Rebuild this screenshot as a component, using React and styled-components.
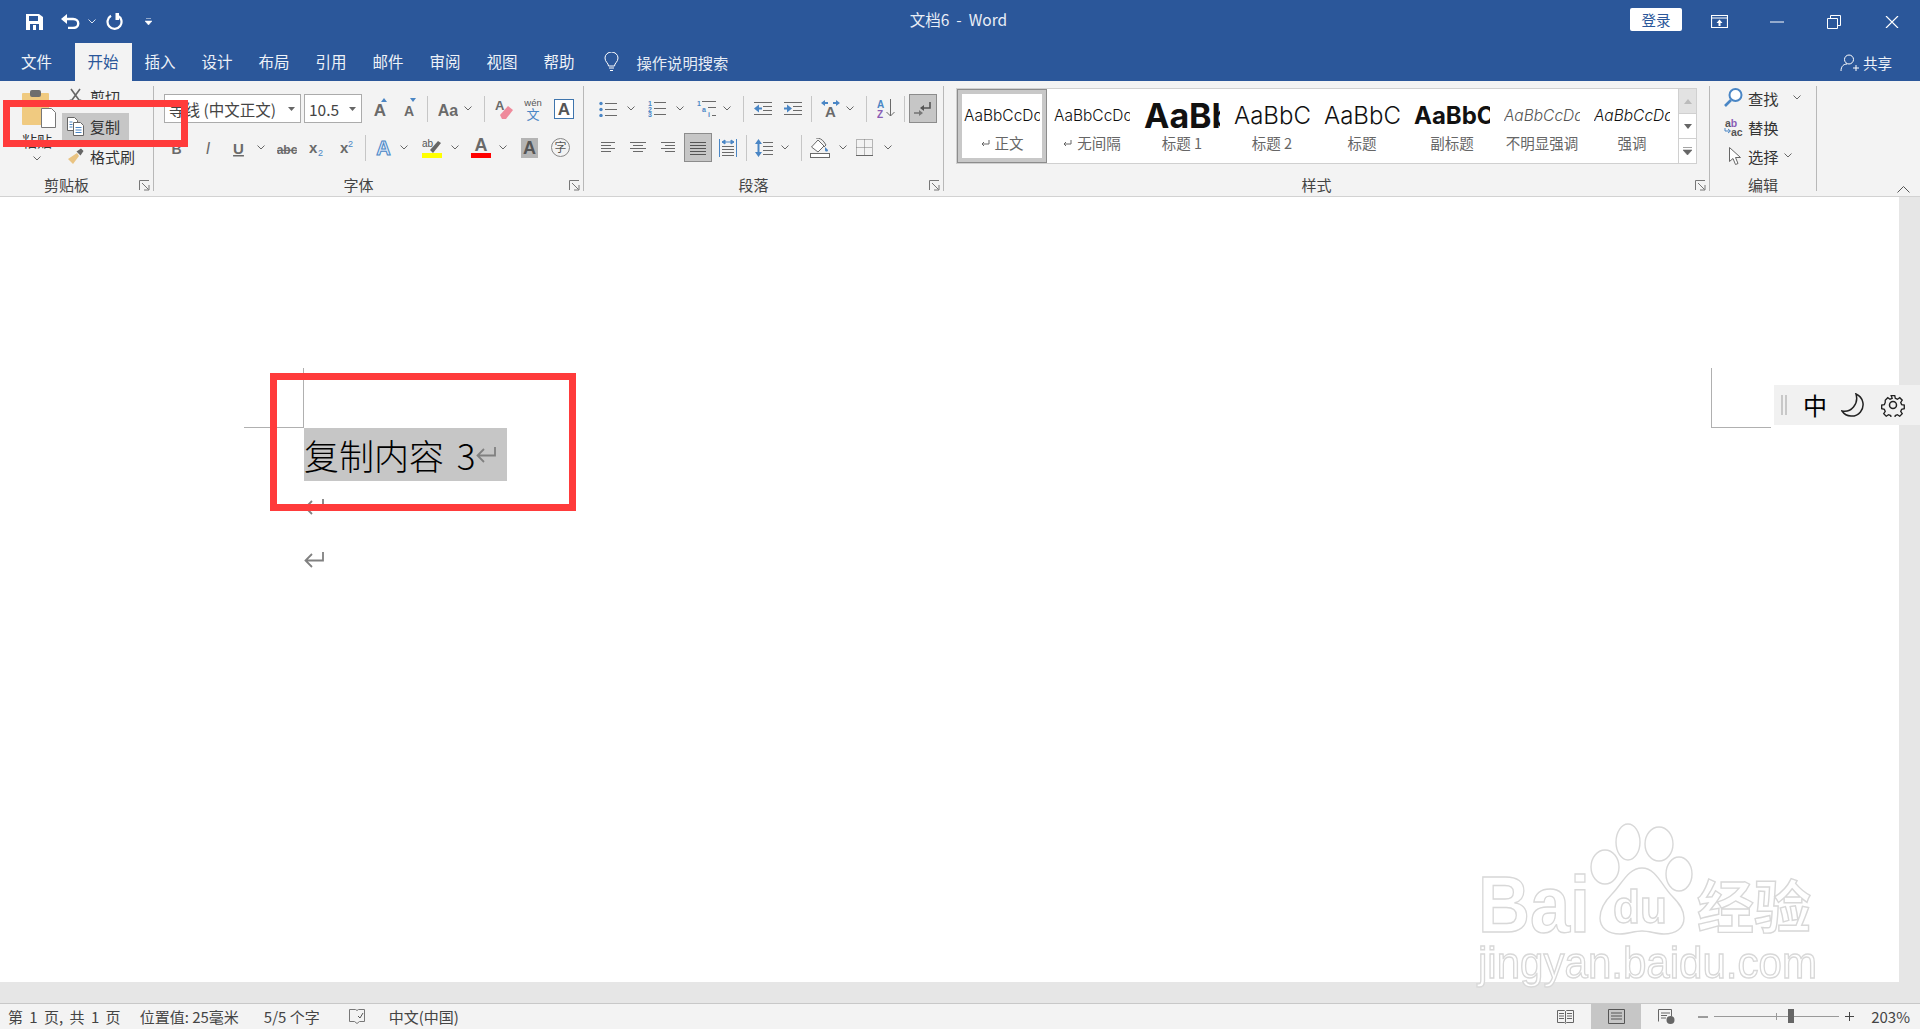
import React from "react";
import styled, { createGlobalStyle } from "styled-components";

const BLUE = "#2b579a";
const GREY = "#6a6a6a";
const ICON_BLUE = "#4a86c5";
const SANS = "Liberation Sans, sans-serif";
const CJK = `"Noto Sans CJK SC", "Liberation Sans", sans-serif`;

const GlobalStyle = createGlobalStyle`
  html, body { margin: 0; padding: 0; height: 100%; overflow: hidden; }
  body { font-family: ${CJK}; color: #333; background: #fff; }
`;

const Shell = styled.div`
  position: relative;
  display: flex;
  flex-direction: column;
  width: 1920px;
  height: 1029px;
  overflow: hidden;
`;

const TitleBar = styled.div`
  display: flex;
  align-items: center;
  height: 43px;
  padding-right: 21px;
  background: ${BLUE};
  color: #fff;
`;

const DocTitle = styled.div`
  position: absolute;
  left: -3px;
  right: 0;
  top: 9px;
  text-align: center;
  font-size: 15.5px;
  line-height: 20px;
  color: #e9eef6;
`;

const Ico = styled.svg`
  flex: none;
  display: block;
  margin-left: ${(p) => p.$ml || 0}px;
`;

const StyleMark = styled(Ico)`
  margin-right: 5px;
`;

const LoginBtn = styled.div`
  width: 52px;
  height: 23px;
  margin-left: auto;
  margin-right: 29px;
  margin-top: -4px;
  border-radius: 2px;
  background: #fff;
  color: ${BLUE};
  font-size: 14.5px;
  line-height: 23px;
  text-align: center;
`;

const TabBar = styled.div`
  display: flex;
  align-items: stretch;
  height: 38px;
  background: ${BLUE};
`;

const Tab = styled.div`
  width: 57px;
  margin-left: ${(p) => p.$ml || 0}px;
  padding-top: 6px;
  box-sizing: border-box;
  text-align: center;
  font-size: 15.5px;
  line-height: 24px;
  color: ${(p) => (p.$active ? BLUE : "#eef2f8")};
  background: ${(p) => (p.$active ? "#f3f3f3" : "transparent")};
`;

const SearchHint = styled.div`
  display: flex;
  align-items: center;
  margin-left: 16px;
  padding-bottom: 1px;
  font-size: 15.3px;
  color: #e6ecf5;
`;

const HintText = styled.span`
  margin-left: ${(p) => p.$ml}px;
  white-space: nowrap;
`;

const Share = styled.div`
  display: flex;
  align-items: center;
  margin-left: auto;
  margin-right: 28px;
  padding-top: 1px;
  font-size: 14.5px;
  color: #eef2f8;
`;

const Ribbon = styled.div`
  position: relative;
  display: flex;
  align-items: stretch;
  height: 116px;
  padding: 5px 0;
  box-sizing: border-box;
  background: #f3f3f3;
  border-bottom: 1px solid #d2d2d2;
`;

const Group = styled.div`
  position: relative;
  display: flex;
  flex-direction: column;
  width: ${(p) => p.$w}px;
  box-sizing: border-box;
  border-right: 1px solid #b8b8b8;
`;

const ToolRow = styled.div`
  display: flex;
  align-items: center;
  height: 29px;
  margin-top: ${(p) => p.$mt}px;
`;

const GroupLabel = styled.div`
  margin-top: auto;
  margin-bottom: -1px;
  padding-right: ${(p) => (p.$launcher ? 20 : 0)}px;
  text-align: center;
  font-size: 15px;
  line-height: 14px;
  color: #444;
`;

const Launcher = styled.svg`
  position: absolute;
  right: 3px;
  bottom: 0;
`;

const VSep = styled.i`
  flex: none;
  width: 1px;
  height: 26px;
  margin-left: ${(p) => p.$ml}px;
  background: #c6c6c6;
`;

const Combo = styled.div`
  display: flex;
  align-items: center;
  justify-content: space-between;
  width: ${(p) => p.$w}px;
  height: 29px;
  margin-left: ${(p) => p.$ml}px;
  padding: 0 5px 0 4px;
  box-sizing: border-box;
  background: #fff;
  border: 1px solid #ababab;
  font-size: 15.5px;
  white-space: nowrap;
  overflow: hidden;
  color: #444;
`;

const ToggleBtn = styled.div`
  display: flex;
  align-items: center;
  justify-content: center;
  width: 28px;
  height: 29px;
  margin-left: ${(p) => p.$ml}px;
  box-sizing: border-box;
  background: #c6c6c6;
  border: 1px solid #8c8c8c;
`;

const ClipboardBody = styled.div`
  display: flex;
  height: 92px;
`;

const PasteCol = styled.div`
  display: flex;
  flex-direction: column;
  align-items: center;
  width: 62px;
  padding: 4px 0 0 12px;
  box-sizing: border-box;
  font-size: 15px;
  color: #333;
`;

const PasteLabel = styled.div`
  margin: 2px 0 5px;
  line-height: 20px;
  white-space: nowrap;
`;

const ClipCol = styled.div`
  display: flex;
  flex-direction: column;
  margin-top: -3px;
`;

const ClipItem = styled.div`
  display: flex;
  align-items: center;
  width: 67px;
  height: 27px;
  margin-top: ${(p) => p.$mt || 0}px;
  padding-left: 5px;
  box-sizing: border-box;
  font-size: 15px;
  white-space: nowrap;
  color: #333;
  background: ${(p) => (p.$hover ? "#c6c6c6" : "transparent")};
`;

const ClipText = styled.span`
  margin-left: 6px;
`;

const Gallery = styled.div`
  display: flex;
  width: 741px;
  height: 76px;
  margin: 2px 0 0 12px;
  box-sizing: border-box;
  background: #fff;
  border: 1px solid #d0d0d0;
`;

const StyleItem = styled.div`
  display: flex;
  flex-direction: column;
  align-items: center;
  width: 90px;
  height: 74px;
  flex: none;
  box-sizing: border-box;
  border: ${(p) => (p.$selected ? "5px solid #c8c8c8" : "5px solid transparent")};
  outline: ${(p) => (p.$selected ? "1px solid #8c8c8c" : "none")};
  outline-offset: -1px;
`;

const Preview = styled.div`
  width: 76px;
  height: 42px;
  overflow: hidden;
  display: flex;
  align-items: center;
  white-space: nowrap;
  font-family: Inter, "Liberation Sans", sans-serif;
  font-size: ${(p) => p.$size}px;
  font-weight: ${(p) => (p.$bold ? 700 : 300)};
  font-style: ${(p) => (p.$italic ? "italic" : "normal")};
  color: ${(p) => p.$color || "#111"};
`;

const StyleName = styled.div`
  display: flex;
  align-items: center;
  margin-top: -3px;
  font-size: 14.5px;
  line-height: 20px;
  white-space: nowrap;
  color: #666;
`;

const GalleryScroll = styled.div`
  display: flex;
  flex-direction: column;
  width: 19px;
  margin-left: 1px;
  border-left: 1px solid #d0d0d0;
`;

const ScrollBtn = styled.div`
  display: flex;
  align-items: center;
  justify-content: center;
  flex: 1;
  background: ${(p) => (p.$off ? "#e2e2e2" : "#fff")};
  border-bottom: 1px solid #d0d0d0;
  &:last-child { border-bottom: 0; }
`;

const EditList = styled.div`
  display: flex;
  flex-direction: column;
  margin-top: -3px;
  padding-left: 14px;
  height: 88px;
`;

const EditItem = styled.div`
  display: flex;
  align-items: center;
  height: 29px;
  font-size: 15.3px;
  color: #333;
`;

const EditText = styled.span`
  margin-left: ${(p) => p.$ml}px;
`;

const CollapseRibbon = styled.svg`
  position: absolute;
  right: 10px;
  bottom: 3px;
`;

const DocArea = styled.div`
  flex: 1;
  display: flex;
  min-height: 0;
`;

const DocPage = styled.div`
  position: relative;
  flex: 1;
  padding: 231px 0 0 304px;
  box-sizing: border-box;
  background: #fff;
`;

const Gutter = styled.div`
  width: 21px;
  background: #e6e6e6;
`;

const CropMark = styled.div`
  position: absolute;
  top: 171px;
  left: ${(p) => p.$left}px;
  width: 60px;
  height: 60px;
  box-sizing: border-box;
  border-bottom: 1px solid #b0b0b0;
  ${(p) => (p.$side === "left" ? "border-right" : "border-left")}: 1px solid #b0b0b0;
`;

const Para = styled.div`
  display: flex;
  align-items: center;
  height: 53px;
  padding-bottom: 2px;
  box-sizing: border-box;
`;

const Selected = styled.div`
  display: flex;
  align-items: center;
  height: 53px;
  width: 203px;
  background: #c6c6c6;
  font-size: 35px;
  font-weight: 300;
  line-height: 53px;
  word-spacing: 5px;
  color: #000;
  white-space: nowrap;
`;

const HBand = styled.div`
  height: 21px;
  background: #e6e6e6;
`;

const StatusBar = styled.div`
  display: flex;
  align-items: center;
  height: 26px;
  padding-right: 10px;
  box-sizing: border-box;
  background: #f3f3f3;
  border-top: 1px solid #c8c8c8;
  font-size: 15px;
  color: #444;
`;

const StatusText = styled.span`
  margin-left: ${(p) => p.$ml}px;
  white-space: nowrap;
  word-spacing: ${(p) => p.$spread || 0}px;
`;

const StatusRight = styled.div`
  display: flex;
  align-items: center;
  margin-left: auto;
`;

const ViewBtn = styled.div`
  display: flex;
  align-items: center;
  justify-content: center;
  width: 50px;
  height: 25px;
  margin-left: ${(p) => p.$ml || 0}px;
  background: ${(p) => (p.$active ? "#c6c6c6" : "transparent")};
`;

const ZoomTrack = styled.div`
  position: relative;
  width: 125px;
  height: 1px;
  margin-left: 6px;
  background: #999;
`;

const ZoomTick = styled.i`
  position: absolute;
  left: 62px;
  top: -3px;
  width: 1px;
  height: 7px;
  background: #999;
`;

const ZoomThumb = styled.i`
  position: absolute;
  left: 74px;
  top: -7px;
  width: 6px;
  height: 14px;
  background: #666;
`;

const RedFrame = styled.div`
  position: absolute;
  left: ${(p) => p.$x}px;
  top: ${(p) => p.$y}px;
  width: ${(p) => p.$w}px;
  height: ${(p) => p.$h}px;
  box-sizing: border-box;
  border: 7px solid #ff3b3b;
  pointer-events: none;
`;

const ImeBar = styled.div`
  position: absolute;
  left: 1774px;
  top: 385px;
  display: flex;
  align-items: center;
  width: 146px;
  height: 40px;
  background: #f1f1f1;
`;

const ImeHandle = styled.i`
  width: 6px;
  height: 20px;
  margin-left: 7px;
  border-left: 2px solid #c8c8c8;
  border-right: 2px solid #c8c8c8;
  box-sizing: border-box;
`;

const ImeChar = styled.span`
  margin-left: 16px;
  font-size: 24px;
  line-height: 40px;
  color: #000;
`;

const Watermark = styled.svg`
  position: absolute;
  left: 1470px;
  top: 830px;
  overflow: visible;
  filter: blur(0.6px);
  pointer-events: none;
`;

// every ribbon chevron is the same little v
const Chev = ({ ml = 0, color = "#666" }) => (
  <Ico $ml={ml} width="8" height="5" viewBox="0 0 8 5">
    <path d="M.5.5 4 4 7.5.5" fill="none" stroke={color} />
  </Ico>
);

const Lines = ({ ml, w = 18, h = 16, rows, color = GREY }) => (
  <Ico $ml={ml} width={w} height={h} viewBox={`0 0 ${w} ${h}`}>
    {rows.map(([x1, x2, y], i) => (
      <path key={i} d={`M${x1} ${y + 0.5}H${x2}`} stroke={color} />
    ))}
  </Ico>
);

const LetterA = ({ ml, w = 18, h = 22, size = 20, fill = GREY, stroke, children }) => (
  <Ico $ml={ml} width={w} height={h} viewBox={`0 0 ${w} ${h}`}>
    <text
      x={w / 2}
      y={h - 4}
      textAnchor="middle"
      fontFamily={SANS}
      fontWeight="700"
      fontSize={size}
      fill={fill}
      stroke={stroke}
    >
      A
    </text>
    {children}
  </Ico>
);

const IconLetter = ({ ml, w, h = 20, size = 16, weight = 700, italic, deco, children }) => (
  <Ico $ml={ml} width={w} height={h} viewBox={`0 0 ${w} ${h}`}>
    <text
      x={w / 2}
      y={h - 4}
      textAnchor="middle"
      fontFamily={SANS}
      fontWeight={weight}
      fontStyle={italic ? "italic" : "normal"}
      textDecoration={deco}
      fontSize={size}
      fill={GREY}
    >
      {children}
    </text>
  </Ico>
);

const LauncherIcon = () => (
  <Launcher width="11" height="11" viewBox="0 0 11 11">
    <path d="M.5 10V.5H10M3 3l6.5 6.5M5 10h5V5" fill="none" stroke="#777" />
  </Launcher>
);

const DropArrow = () => (
  <Ico width="7" height="4" viewBox="0 0 7 4">
    <path d="M0 0h7L3.5 4z" fill="#666" />
  </Ico>
);

const Clipboard = () => (
  <ClipboardBody>
    <PasteCol>
      <Ico width="38" height="39" viewBox="0 0 38 39">
        <rect x="4" y="3" width="27" height="32" rx="1" fill="#f0ca80" />
        <rect x="12" y="0" width="11" height="7" rx="2" fill="#6e6e6e" />
        <path d="M23.5 18.5h10l4 4v15h-14z" fill="#fff" stroke="#777" />
      </Ico>
      <PasteLabel>粘贴</PasteLabel>
      <Chev />
    </PasteCol>
    <ClipCol>
      <ClipItem>
        <Ico width="17" height="17" viewBox="0 0 17 17">
          <path d="M4 1l8 11M13 1 5 12" stroke="#666" strokeWidth="1.6" fill="none" />
          <circle cx="4" cy="14" r="2.2" fill="none" stroke="#666" />
          <circle cx="13" cy="14" r="2.2" fill="none" stroke="#666" />
        </Ico>
        <ClipText>剪切</ClipText>
      </ClipItem>
      <ClipItem $hover $mt={3}>
        <Ico width="17" height="19" viewBox="0 0 17 19">
          <path d="M.5.5h7l3 3v10H.5z" fill="#fff" stroke="#666" />
          <path d="M6.5 5.5h7l3 3v10h-10z" fill="#fff" stroke="#666" />
          <path d="M8.5 10.5h6M8.5 13h6M8.5 15.5h6M2.5 5h3M2.5 7.5h3M2.5 10h3" stroke={ICON_BLUE} />
        </Ico>
        <ClipText>复制</ClipText>
      </ClipItem>
      <ClipItem $mt={3}>
        <Ico width="17" height="17" viewBox="0 0 17 17">
          <path d="M10 5 1 11l5 5 6-8z" fill="#e9c382" />
          <path d="M9.5 3.5 14 .5l2.5 2.5-3 4.5z" fill="#666" />
        </Ico>
        <ClipText>格式刷</ClipText>
      </ClipItem>
    </ClipCol>
  </ClipboardBody>
);

const FontRows = () => (
  <>
    <ToolRow $mt={8}>
      <Combo $ml={10} $w={137}>
        等线 (中文正文)
        <DropArrow />
      </Combo>
      <Combo $ml={3} $w={58}>
        10.5
        <DropArrow />
      </Combo>
      <LetterA ml={11} w={14} size={17}>
        <path d="M8 4h6L11 0z" fill={ICON_BLUE} />
      </LetterA>
      <LetterA ml={15} w={14} size={14}>
        <path d="M8 0h6l-3 4z" fill={ICON_BLUE} />
      </LetterA>
      <VSep $ml={11} />
      <IconLetter ml={10} w={20} size={16} h={22}>Aa</IconLetter>
      <Chev ml={6} />
      <VSep $ml={12} />
      <Ico $ml={10} width="18" height="22" viewBox="0 0 18 22">
        <text x="0" y="12" fontFamily={SANS} fontWeight="700" fontSize="13" fill={GREY}>A</text>
        <path d="M5 17 13 8l5 4-7 9H7z" fill="#ef8a9b" />
      </Ico>
      <Ico $ml={11} width="18" height="24" viewBox="0 0 18 24">
        <text x="9" y="9" textAnchor="middle" fontFamily={SANS} fontSize="9.5" fill="#555">wén</text>
        <text x="9" y="22" textAnchor="middle" fontFamily={CJK} fontSize="13" fill={ICON_BLUE}>文</text>
      </Ico>
      <Ico $ml={12} width="20" height="20" viewBox="0 0 20 20">
        <rect x=".5" y=".5" width="19" height="19" fill="#fff" stroke="#3f75ad" />
        <text x="10" y="16" textAnchor="middle" fontFamily={SANS} fontWeight="700" fontSize="17" fill="#555">A</text>
      </Ico>
    </ToolRow>
    <ToolRow $mt={10}>
      <IconLetter ml={17} w={11} size={14}>B</IconLetter>
      <IconLetter ml={22} w={8} size={16} weight={400} italic>I</IconLetter>
      <IconLetter ml={21} w={11} size={15} deco="underline">U</IconLetter>
      <Chev ml={13} />
      <IconLetter ml={12} w={20} size={12} deco="line-through">abc</IconLetter>
      <Ico $ml={12} width="16" height="20" viewBox="0 0 16 20">
        <text x="0" y="15" fontFamily={SANS} fontWeight="700" fontSize="15" fill={GREY}>x</text>
        <text x="9" y="18" fontFamily={SANS} fontSize="9" fill={ICON_BLUE}>2</text>
      </Ico>
      <Ico $ml={15} width="14" height="20" viewBox="0 0 14 20">
        <text x="0" y="15" fontFamily={SANS} fontWeight="700" fontSize="15" fill={GREY}>x</text>
        <text x="8" y="9" fontFamily={SANS} fontSize="9" fill={ICON_BLUE}>2</text>
      </Ico>
      <VSep $ml={11} />
      <LetterA ml={9} w={17} size={20} fill="#dceafa" stroke="#4a86c5" />
      <Chev ml={8} />
      <Ico $ml={14} width="20" height="20" viewBox="0 0 20 20">
        <text x="0" y="9" fontFamily={SANS} fontSize="10" fill="#555">ab</text>
        <path d="M8 12 16 3l3 2-8 10z" fill="#666" />
        <rect y="15" width="20" height="5" fill="#ff0" />
      </Ico>
      <Chev ml={9} />
      <Ico $ml={12} width="20" height="21" viewBox="0 0 20 21">
        <text x="10" y="14" textAnchor="middle" fontFamily={SANS} fontWeight="700" fontSize="18" fill={GREY}>A</text>
        <rect y="16" width="20" height="5" fill="#f00" />
      </Ico>
      <Chev ml={8} />
      <Ico $ml={14} width="17" height="20" viewBox="0 0 17 20">
        <rect width="17" height="20" fill="#b4b4b4" />
        <text x="8.5" y="16" textAnchor="middle" fontFamily={SANS} fontWeight="700" fontSize="18" fill="#555">A</text>
      </Ico>
      <Ico $ml={13} width="19" height="19" viewBox="0 0 19 19">
        <circle cx="9.5" cy="9.5" r="9" fill="none" stroke="#888" />
        <text x="9.5" y="14" textAnchor="middle" fontFamily={CJK} fontSize="12" fill="#555">字</text>
      </Ico>
    </ToolRow>
  </>
);

const BULLET_ROWS = [[6, 18, 2], [6, 18, 8], [6, 18, 14]];
const INDENT_ROWS = [[0, 18, 1], [9, 18, 5], [9, 18, 9], [0, 18, 13]];

const ListLines = () =>
  BULLET_ROWS.map(([a, b, y]) => <path key={y} d={`M${a} ${y + 0.5}H${b}`} stroke={GREY} />);

const IndentLines = () =>
  INDENT_ROWS.map(([a, b, y]) => <path key={y} d={`M${a} ${y + 0.5}H${b}`} stroke={GREY} />);

const ParagraphRows = () => (
  <>
    <ToolRow $mt={8}>
      <Ico $ml={15} width="18" height="16" viewBox="0 0 18 16">
        <circle cx="2" cy="2.5" r="1.7" fill={ICON_BLUE} />
        <circle cx="2" cy="8.5" r="1.7" fill={ICON_BLUE} />
        <circle cx="2" cy="14.5" r="1.7" fill={ICON_BLUE} />
        <ListLines />
      </Ico>
      <Chev ml={10} />
      <Ico $ml={13} width="18" height="17" viewBox="0 0 18 17">
        <text x="0" y="6" fontFamily={SANS} fontSize="7" fontWeight="700" fill={ICON_BLUE}>1</text>
        <text x="0" y="11.5" fontFamily={SANS} fontSize="7" fontWeight="700" fill={ICON_BLUE}>2</text>
        <text x="0" y="17" fontFamily={SANS} fontSize="7" fontWeight="700" fill={ICON_BLUE}>3</text>
        <ListLines />
      </Ico>
      <Chev ml={10} />
      <Ico $ml={13} width="19" height="17" viewBox="0 0 19 17">
        <text x="0" y="6" fontFamily={SANS} fontSize="7" fontWeight="700" fill={ICON_BLUE}>1</text>
        <text x="5" y="12" fontFamily={SANS} fontSize="7" fontWeight="700" fill={ICON_BLUE}>a</text>
        <text x="11" y="17" fontFamily={SANS} fontSize="7" fontWeight="700" fill={ICON_BLUE}>i</text>
        <path d="M5 1.5H19M11 7.5H19M15 15.5H19" stroke={GREY} />
      </Ico>
      <Chev ml={7} />
      <VSep $ml={12} />
      <Ico $ml={10} width="18" height="15" viewBox="0 0 18 15">
        <IndentLines />
        <path d="M0 7.5 5 3.5v8zM5 6.5h3v2H5z" fill={ICON_BLUE} />
      </Ico>
      <Ico $ml={12} width="18" height="15" viewBox="0 0 18 15">
        <IndentLines />
        <path d="M8 7.5 3 3.5v8zM0 6.5h3v2H0z" fill={ICON_BLUE} />
      </Ico>
      <VSep $ml={9} />
      <Ico $ml={9} width="19" height="17" viewBox="0 0 19 17">
        <path d="M0 3l4-3v2h3v2H4v2zM19 3l-4-3v2h-3v2h3v2z" fill={ICON_BLUE} />
        <text x="9.5" y="17" textAnchor="middle" fontFamily={SANS} fontWeight="700" fontSize="15" fill={GREY}>A</text>
      </Ico>
      <Chev ml={6} />
      <VSep $ml={12} />
      <Ico $ml={10} width="19" height="19" viewBox="0 0 19 19">
        <text x="0" y="9" fontFamily={SANS} fontWeight="700" fontSize="10" fill={ICON_BLUE}>A</text>
        <text x="0" y="19" fontFamily={SANS} fontWeight="700" fontSize="10" fill="#8a5cb5">Z</text>
        <path d="M13.5 0v17M9.5 13l4 4 4-4" fill="none" stroke={GREY} />
      </Ico>
      <VSep $ml={8} />
      <ToggleBtn $ml={4}>
        <Ico width="18" height="16" viewBox="0 0 18 16">
          <path d="M16 1v6H7" fill="none" stroke="#555" strokeWidth="1.6" />
          <path d="M10 4 6 7l4 3z" fill="#555" />
          <path d="M0 12h6" stroke="#777" strokeWidth="1.6" />
          <path d="M5 9l4 3-4 3z" fill="#777" />
        </Ico>
      </ToggleBtn>
    </ToolRow>
    <ToolRow $mt={10}>
      <Lines ml={17} w={14} h={13} rows={[[0, 14, 1], [0, 10, 4], [0, 14, 7], [0, 10, 10]]} />
      <Lines ml={15} w={16} h={13} rows={[[0, 16, 1], [3, 13, 4], [0, 16, 7], [3, 13, 10]]} />
      <Lines ml={15} w={14} h={13} rows={[[0, 14, 1], [4, 14, 4], [0, 14, 7], [4, 14, 10]]} />
      <ToggleBtn $ml={9}>
        <Lines w={16} h={14} rows={[[0, 16, 1], [0, 16, 4], [0, 16, 7], [0, 16, 10], [0, 16, 13]]} color="#555" />
      </ToggleBtn>
      <Ico $ml={7} width="18" height="18" viewBox="0 0 18 18">
        <path d="M.5 0v18M17.5 0v18" stroke={ICON_BLUE} />
        <path d="M3 3h12M3 3l3-2v4zM15 3l-3-2v4z" fill={ICON_BLUE} stroke={ICON_BLUE} />
        <path d="M3 7.5h12M3 10.5h12M3 13.5h12M3 16.5h12" stroke={GREY} />
      </Ico>
      <VSep $ml={9} />
      <Ico $ml={8} width="18" height="18" viewBox="0 0 18 18">
        <path d="M3.5 3v12" stroke={ICON_BLUE} strokeWidth="2" />
        <path d="M0 5l3.5-5L7 5zM0 13l3.5 5L7 13z" fill={ICON_BLUE} />
        <path d="M8 3.5h10M8 7.5h10M8 11.5h10M8 15.5h10" stroke={GREY} />
      </Ico>
      <Chev ml={8} />
      <VSep $ml={12} />
      <Ico $ml={8} width="20" height="20" viewBox="0 0 20 20">
        <path d="M8 2 1.5 9 8 14l6-6z" fill="#fff" stroke={GREY} />
        <path d="M6 0c3 0 6 1 8 4l2 3-2 2" fill="none" stroke={GREY} />
        <path d="M15 9l3 3c0 2-3 2-3 0z" fill={ICON_BLUE} />
        <rect x=".5" y="15.5" width="19" height="4" fill="#fff" stroke={GREY} />
      </Ico>
      <Chev ml={9} />
      <Ico $ml={9} width="17" height="17" viewBox="0 0 17 17">
        <path d="M.5 .5h16v16H.5zM8.5 .5v16M.5 8.5h16" fill="none" stroke="#777" strokeDasharray="1 1" />
        <path d="M0 16.5h17" stroke="#666" />
      </Ico>
      <Chev ml={11} />
    </ToolRow>
  </>
);

const STYLES = [
  { name: "正文", mark: true, selected: true, size: 15.5, text: "AaBbCcDd" },
  { name: "无间隔", mark: true, size: 15.5, text: "AaBbCcDd" },
  { name: "标题 1", size: 34, bold: true, text: "AaBb" },
  { name: "标题 2", size: 24, text: "AaBbC" },
  { name: "标题", size: 24, text: "AaBbC" },
  { name: "副标题", size: 24, bold: true, text: "AaBbC" },
  { name: "不明显强调", size: 15.5, italic: true, color: "#555", text: "AaBbCcDd" },
  { name: "强调", size: 15.5, italic: true, text: "AaBbCcDd" },
];

const Styles = () => (
  <Gallery>
    {STYLES.map((s) => (
      <StyleItem key={s.name} $selected={s.selected}>
        <Preview $size={s.size} $bold={s.bold} $italic={s.italic} $color={s.color}>
          {s.text}
        </Preview>
        <StyleName>
          {s.mark && (
            <StyleMark width="9" height="7" viewBox="0 0 9 7">
              <path d="M8 0v4H1M3 2 1 4l2 2" fill="none" stroke="#666" />
            </StyleMark>
          )}
          {s.name}
        </StyleName>
      </StyleItem>
    ))}
    <GalleryScroll>
      <ScrollBtn $off>
        <Ico width="8" height="5" viewBox="0 0 8 5"><path d="M0 5h8L4 0z" fill="#bbb" /></Ico>
      </ScrollBtn>
      <ScrollBtn>
        <Ico width="8" height="5" viewBox="0 0 8 5"><path d="M0 0h8L4 5z" fill="#666" /></Ico>
      </ScrollBtn>
      <ScrollBtn>
        <Ico width="9" height="8" viewBox="0 0 9 8"><path d="M0 .5h9M0 3h9L4.5 8z" fill="#666" stroke="#666" strokeWidth=".6" /></Ico>
      </ScrollBtn>
    </GalleryScroll>
  </Gallery>
);

const Editing = () => (
  <EditList>
    <EditItem>
      <Ico width="19" height="19" viewBox="0 0 19 19">
        <circle cx="11.5" cy="7" r="6" fill="#fff" stroke={ICON_BLUE} strokeWidth="2" />
        <path d="M7 12 1 18" stroke={ICON_BLUE} strokeWidth="2.6" />
      </Ico>
      <EditText $ml={5}>查找</EditText>
      <Chev ml={14} />
    </EditItem>
    <EditItem>
      <Ico width="20" height="18" viewBox="0 0 20 18">
        <text x="1" y="9" fontFamily={SANS} fontWeight="700" fontSize="10.5" fill="#555">a<tspan fill="#8a5cb5">b</tspan></text>
        <text x="7" y="18" fontFamily={SANS} fontWeight="700" fontSize="10.5" fill="#555">ac</text>
        <path d="M1 10v3h5M4 11l2.5 2L4 15" fill="none" stroke={ICON_BLUE} />
      </Ico>
      <EditText $ml={4}>替换</EditText>
    </EditItem>
    <EditItem>
      <Ico $ml={5} width="12" height="18" viewBox="0 0 12 18">
        <path d="M.5.5v14l3.5-3 2.5 6 2.5-1-2.5-6h5z" fill="#fff" stroke="#666" />
      </Ico>
      <EditText $ml={7}>选择</EditText>
      <Chev ml={5} />
    </EditItem>
  </EditList>
);

const Pilcrow = ({ ml = 0 }) => (
  <Ico $ml={ml} width="20" height="18" viewBox="0 0 20 18">
    <path d="M19 1v8.5H2M8 3 1.500 9.500 8 16" fill="none" stroke="#808080" strokeWidth="1.8" />
  </Ico>
);

export default function App() {
  return (
    <Shell>
      <GlobalStyle />
      <TitleBar>
        <Ico $ml={26} width="17" height="16" viewBox="0 0 17 16">
          <path d="M0 0h13l4 3v13H0z" fill="#fff" />
          <path d="M3 2h9v5H3z" fill={BLUE} />
          <path d="M4 10h9v6H4z" fill={BLUE} />
          <path d="M7 11h3v5H7z" fill="#fff" />
        </Ico>
        <Ico $ml={18} width="19" height="15" viewBox="0 0 19 15">
          <path d="M2 5h10c7 0 7 9 0 9H7" fill="none" stroke="#fff" strokeWidth="2.4" />
          <path d="M6 0v10L0 5z" fill="#fff" />
        </Ico>
        <Chev ml={8} color="#dce5f2" />
        <Ico $ml={10} width="17" height="17" viewBox="0 0 17 17">
          <path d="M5 2.8a7 7 0 1 0 6.5-.3" fill="none" stroke="#fff" strokeWidth="2.2" />
          <path d="M9.500 0H13v7H9.500z" fill="#fff" />
        </Ico>
        <Ico $ml={22} width="7" height="7" viewBox="0 0 7 7">
          <path d="M1 .5h5M0 3h7L3.5 7z" fill="#fff" stroke="#fff" strokeWidth=".5" />
        </Ico>
        <DocTitle>文档6&nbsp;&nbsp;-&nbsp;&nbsp;Word</DocTitle>
        <LoginBtn>登录</LoginBtn>
        <Ico width="17" height="13" viewBox="0 0 17 13">
          <path d="M.5.5h16v12H.5zM1 3h15" fill="none" stroke="#fff" strokeWidth="1.2" />
          <path d="M8.5 4.500 5.500 8h2v3h2V8h2z" fill="#fff" />
        </Ico>
        <Ico $ml={42} width="14" height="2" viewBox="0 0 14 2"><path d="M0 1h14" stroke="#fff" /></Ico>
        <Ico $ml={43} width="14" height="14" viewBox="0 0 14 14">
          <path d="M.5 3.5h10v10H.5zM3.5 3.5v-3h10v10h-3" fill="none" stroke="#fff" />
        </Ico>
        <Ico $ml={44} width="14" height="12" viewBox="0 0 14 12">
          <path d="M1 0l12 12M13 0 1 12" stroke="#fff" strokeWidth="1.2" />
        </Ico>
      </TitleBar>

      <TabBar>
        <Tab $ml={8}>文件</Tab>
        <Tab $ml={9.5} $active>开始</Tab>
        <Tab>插入</Tab>
        <Tab>设计</Tab>
        <Tab>布局</Tab>
        <Tab>引用</Tab>
        <Tab>邮件</Tab>
        <Tab>审阅</Tab>
        <Tab>视图</Tab>
        <Tab>帮助</Tab>
        <SearchHint>
          <Ico width="15" height="20" viewBox="0 0 15 20">
            <path d="M4.5 14c0-3-3.500-4-3.500-8a6.500 6 0 0 1 13 0c0 4-3.500 5-3.500 8z" fill="none" stroke="#fff" />
            <path d="M5 16h5M6 18.500h3" stroke="#fff" />
          </Ico>
          <HintText $ml={18}>操作说明搜索</HintText>
        </SearchHint>
        <Share>
          <Ico width="19" height="18" viewBox="0 0 19 18">
            <circle cx="9" cy="5.5" r="4.5" fill="none" stroke="#fff" />
            <path d="M1 17c0-5 3-7 6-7M13 14h6M16 11v6" fill="none" stroke="#fff" />
          </Ico>
          <HintText $ml={4}>共享</HintText>
        </Share>
      </TabBar>

      <Ribbon>
        <Group $w={154}>
          <Clipboard />
          <GroupLabel $launcher>剪贴板</GroupLabel>
          <LauncherIcon />
        </Group>
        <Group $w={430}>
          <FontRows />
          <GroupLabel $launcher>字体</GroupLabel>
          <LauncherIcon />
        </Group>
        <Group $w={360}>
          <ParagraphRows />
          <GroupLabel $launcher>段落</GroupLabel>
          <LauncherIcon />
        </Group>
        <Group $w={766}>
          <Styles />
          <GroupLabel $launcher>样式</GroupLabel>
          <LauncherIcon />
        </Group>
        <Group $w={107}>
          <Editing />
          <GroupLabel>编辑</GroupLabel>
        </Group>
        <CollapseRibbon width="13" height="7" viewBox="0 0 13 7">
          <path d="M.5 6.5 6.5.5l6 6" fill="none" stroke="#555" />
        </CollapseRibbon>
      </Ribbon>

      <DocArea>
        <DocPage>
          <CropMark $side="left" $left={244} />
          <CropMark $side="right" $left={1711} />
          <Selected>
            复制内容 3
            <Pilcrow ml={1} />
          </Selected>
          <Para><Pilcrow /></Para>
          <Para><Pilcrow /></Para>
        </DocPage>
        <Gutter />
      </DocArea>
      <HBand />

      <StatusBar>
        <StatusText $ml={8} $spread={3}>第 1 页, 共 1 页</StatusText>
        <StatusText $ml={19}>位置值: 25毫米</StatusText>
        <StatusText $ml={25}>5/5 个字</StatusText>
        <Ico $ml={29} width="16" height="15" viewBox="0 0 16 15">
          <path d="M.5.5h6l1.500 1 1.500-1h6v12h-5L8 14.500 5.500 12.500h-5z" fill="none" stroke="#777" />
          <path d="M9 7l2 2 3-5" fill="none" stroke="#555" />
        </Ico>
        <StatusText $ml={24}>中文(中国)</StatusText>
        <StatusRight>
          <Ico width="17" height="14" viewBox="0 0 17 14">
            <path d="M.5.5h7l1 1 1-1h7v12h-7l-1 1-1-1h-7zM8.500 1.500v11M2 3.500h5M2 6h5M2 8.500h5M10 3.500h5M10 6h5M10 8.500h5" fill="none" stroke="#666" />
          </Ico>
          <ViewBtn $ml={17} $active>
            <Ico width="17" height="15" viewBox="0 0 17 15">
              <path d="M.5.5h16v14H.5zM3 4h11M3 7h11M3 10h11" fill="none" stroke="#555" />
            </Ico>
          </ViewBtn>
          <ViewBtn>
            <Ico width="17" height="15" viewBox="0 0 17 15">
              <path d="M.5 12.500V.5h13v7M3 4h9M3 6.500h6M3 9h5" fill="none" stroke="#666" />
              <circle cx="12.5" cy="11" r="4" fill="#666" />
            </Ico>
          </ViewBtn>
          <Ico $ml={7} width="10" height="2" viewBox="0 0 10 2"><path d="M0 1h10" stroke="#444" /></Ico>
          <ZoomTrack>
            <ZoomTick />
            <ZoomThumb />
          </ZoomTrack>
          <Ico $ml={6} width="9" height="9" viewBox="0 0 9 9"><path d="M0 4.500h9M4.500 0v9" stroke="#444" /></Ico>
          <StatusText $ml={17}>203%</StatusText>
        </StatusRight>
      </StatusBar>

      <ImeBar>
        <ImeHandle />
        <ImeChar>中</ImeChar>
        <Ico $ml={14} width="24" height="24" viewBox="0 0 24 24">
          <path d="M15 1a11.500 11.500 0 1 1-14 17C10 20 18 11 15 1z" fill="none" stroke="#222" strokeWidth="1.5" />
        </Ico>
        <Ico $ml={16} width="24" height="24" viewBox="0 0 24 24" fill="none" stroke="#222" strokeWidth="1.5">
          <circle cx="12" cy="12" r="3.5" />
          <path d="M10 1.500h4l.6 3 2.400 1 2.600-1.700 2.800 2.800-1.700 2.600 1 2.400 3 .6v4l-3 .6-1 2.400 1.700 2.600-2.800 2.800-2.600-1.700-2.400 1-.6 3h-4l-.6-3-2.400-1-2.600 1.700-2.800-2.800 1.700-2.600-1-2.400-3-.6v-4l3-.6 1-2.400L3.300 6.600l2.800-2.800 2.600 1.700 2.400-1z" transform="translate(1.300 1.300) scale(.89)" />
        </Ico>
      </ImeBar>

      <RedFrame $x={3} $y={100} $w={185} $h={47} />
      <RedFrame $x={270} $y={373} $w={306} $h={138} />

      <Watermark width="360" height="165" viewBox="0 0 360 165">
        <g fill="#fff" stroke="#d8d8d8" strokeWidth="1.4">
          <ellipse cx="158" cy="12" rx="12" ry="18" />
          <ellipse cx="189" cy="14" rx="14" ry="17" />
          <ellipse cx="135" cy="37" rx="14" ry="17" />
          <ellipse cx="209" cy="44" rx="13" ry="17" />
          <path d="M172 38c-14 0-20 16-30 26s-12 18-12 24c0 10 8 16 20 16 8 0 14-3 22-3s14 3 22 3c12 0 20-6 20-16 0-8-4-14-12-22-10-10-16-28-30-28z" />
          <text x="8" y="102" fontFamily={SANS} fontWeight="700" fontSize="80" textLength="112" lengthAdjust="spacingAndGlyphs">Bai</text>
          <text x="143" y="93" fontFamily={SANS} fontWeight="700" fontSize="46" textLength="54" lengthAdjust="spacingAndGlyphs">du</text>
          <text x="227" y="98" fontFamily={CJK} fontWeight="700" fontSize="57">经验</text>
          <text x="8" y="148" fontFamily={SANS} fontSize="45" textLength="339" lengthAdjust="spacingAndGlyphs">jingyan.baidu.com</text>
        </g>
      </Watermark>
    </Shell>
  );
}
